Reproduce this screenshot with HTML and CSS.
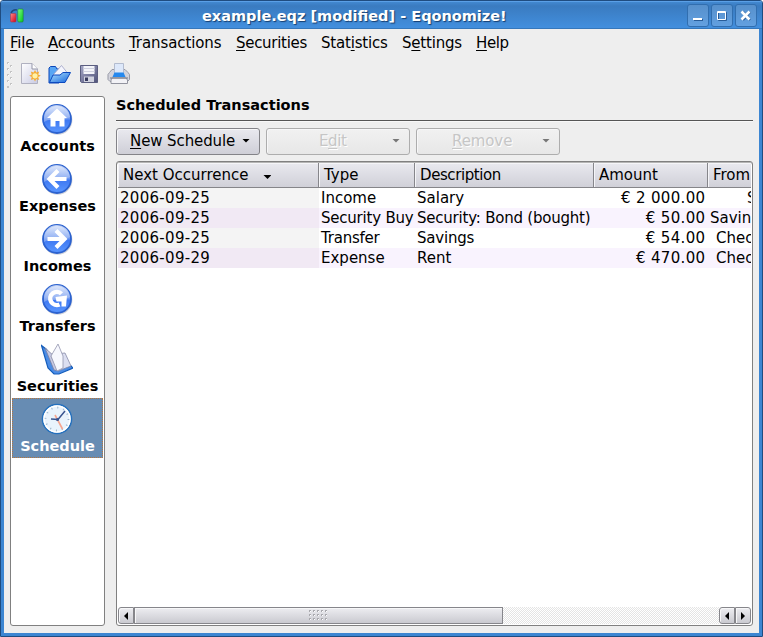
FILE: index.html
```html
<!DOCTYPE html>
<html lang="en">
<head>
<meta charset="utf-8">
<title>example.eqz [modified] - Eqonomize!</title>
<link rel="stylesheet" href="styles.css">
</head>
<body>
<svg class="defs" width="0" height="0">
  <defs>
    <linearGradient id="ball" x1="0" y1="0" x2="0" y2="1"><stop offset="0" stop-color="#d3dffa"/><stop offset=".45" stop-color="#7fa3f3"/><stop offset=".55" stop-color="#3f79f2"/><stop offset="1" stop-color="#5b98ff"/></linearGradient>
    <linearGradient id="gloss" x1="0" y1="0" x2="0" y2="1"><stop offset="0" stop-color="#e8effd"/><stop offset="1" stop-color="#86a8f0"/></linearGradient>
    <linearGradient id="page" x1="0" y1="0" x2="1" y2="1"><stop offset="0" stop-color="#fff"/><stop offset="1" stop-color="#c9cbe4"/></linearGradient>
    <linearGradient id="folder" x1="0" y1="0" x2="1" y2="1"><stop offset="0" stop-color="#b4e6ff"/><stop offset="1" stop-color="#1263dc"/></linearGradient>
    <linearGradient id="disk" x1="0" y1="0" x2="1" y2="1"><stop offset="0" stop-color="#a4a6c6"/><stop offset="1" stop-color="#50537a"/></linearGradient>
    <linearGradient id="red" x1="0" y1="0" x2="1" y2="1"><stop offset="0" stop-color="#ff8a8a"/><stop offset="1" stop-color="#d00018"/></linearGradient>
    <linearGradient id="green" x1="0" y1="0" x2="1" y2="1"><stop offset="0" stop-color="#7dff80"/><stop offset="1" stop-color="#06c520"/></linearGradient>
    <g id="disc">
      <circle cx="16.6" cy="17" r="14.8" fill="#8b93a8" opacity=".4"/>
      <circle cx="16" cy="16" r="14" fill="url(#ball)" stroke="#2c62cf" stroke-width="1.8"/>
      <path d="M3 16A13 13 0 0 1 29 14Q22 18 14 17Q7 16 3 19z" fill="url(#gloss)" opacity=".75"/>
    </g>
  </defs>
</svg>
<div class="window">
  <header class="titlebar">
    <svg class="app-icon" width="16" height="16" viewBox="0 0 16 16"><path d="M2 5Q4 1 8 2" fill="none" stroke="#234a80" stroke-width="1.5"/><rect x="1.500" y="5.500" width="5.500" height="8.500" rx="1" fill="url(#red)" stroke="#a33a50" stroke-width=".6"/><rect x="8.800" y="1" width="5.400" height="13" rx="1" fill="url(#green)" stroke="#17803a" stroke-width=".6"/></svg>
    <h1 class="caption">example.eqz [modified] - Eqonomize!</h1>
    <div class="controls">
      <span class="control"><svg width="20" height="20" viewBox="0 0 20 20"><path d="M6 14h9v2h-9z" fill="#285c98"/><path d="M5 13h9v2H5z" fill="#fff"/></svg></span>
      <span class="control"><svg width="20" height="20" viewBox="0 0 20 20"><path d="M6.500 7.500h8v8h-8z" fill="none" stroke="#285c98"/><path d="M5.500 6.500h8v8h-8zM5 7.500h9" fill="none" stroke="#fff"/></svg></span>
      <span class="control"><svg width="20" height="20" viewBox="0 0 20 20"><path d="M7 7l7 8M14 7l-7 8" stroke="#285c98" stroke-width="2.400"/><path d="M5.500 6.500l8 8M13.500 6.500l-8 8" stroke="#fff" stroke-width="2.600"/></svg></span>
    </div>
  </header>
  <nav class="menubar">
    <span class="m-file"><u>F</u>ile</span><span class="m-accounts"><u>A</u>ccounts</span><span class="m-transactions"><u>T</u>ransactions</span><span class="m-securities"><u>S</u>ecurities</span><span class="m-statistics">Stat<u>i</u>stics</span><span class="m-settings">S<u>e</u>ttings</span><span class="m-help"><u>H</u>elp</span>
  </nav>
  <div class="toolbar">
    <svg class="grip" width="6" height="28" viewBox="0 0 6 28"><g fill="#c4c4c4"><path d="M0 0h2v2H0zM3 3h2v2H3zM0 6h2v2H0zM3 9h2v2H3zM0 12h2v2H0zM3 15h2v2H3zM0 18h2v2H0zM3 21h2v2H3zM0 24h2v2H0z"/></g><g fill="#fff"><path d="M1 1h1v1H1zM4 4h1v1H4zM1 7h1v1H1zM4 10h1v1H4zM1 13h1v1H1zM4 16h1v1H4zM1 19h1v1H1zM4 22h1v1H4z"/></g></svg>
    <svg width="22" height="24" viewBox="0 0 22 24"><path d="M2.500 1.500H13l5.500 5.500v14.500h-16z" fill="url(#page)" stroke="#b0b1c0"/><path d="M13 1.500V7h5.500" fill="#fff" stroke="#9395a6"/><path d="M16 8l1.300 2.600 2.900-1-1 2.900 2.600 1.300-2.600 1.300 1 2.900-2.900-1L16 19.600 14.700 17l-2.900 1 1-2.900-2.600-1.300 2.600-1.300-1-2.900 2.900 1z" fill="#f5ad36"/><circle cx="16" cy="13.800" r="2.600" fill="#fff2a6"/></svg>
    <svg width="23" height="24" viewBox="0 0 23 24"><path d="M1 21V6l1.500-1.500h5L9 7h2v14z" fill="#58a6f4" stroke="#0b45b8"/><path d="M5 13l8.500-9.500 6 7.500-1 6H6z" fill="#f4f5fd" stroke="#9da1c4" stroke-width=".8"/><path d="M1.500 20.500L5 13h7l3-2.500h7.500L17 20.500z" fill="url(#folder)" stroke="#0c49bf"/></svg>
    <svg width="22" height="24" viewBox="0 0 22 24"><path d="M2.500 3.500h17v17h-16l-1-1z" fill="url(#disk)" stroke="#5b5e80"/><path d="M5.500 4h11v8h-11z" fill="#f4f5fa"/><path d="M5.500 6.500h11M5.500 9.500h11" stroke="#d0d2e0"/><path d="M6 14.500h10V20H6z" fill="#d0d2df"/><path d="M7 15.500h3V19H7z" fill="#383b5e"/></svg>
    <svg width="24" height="24" viewBox="0 0 24 24"><path d="M5 7.500h13l3 3 1.500 2v5l-2 2H3l-2-2v-5l1.500-2z" fill="#d2d3dc" stroke="#9699a6"/><path d="M7.500 1.500h9v10h-9z" fill="#dde8fa" stroke="#b3bccf"/><path d="M7.500 10.500h9l2 4.500h-13z" fill="#2588ee"/><path d="M5 16h14l1.500 2v3.500H4V18z" fill="#f2f2f6" stroke="#92949f"/><path d="M3 16h18" stroke="#777a87"/></svg>
  </div>
  <main class="workspace">
    <aside class="sidebar">
      <div class="entry"><svg width="32" height="32" viewBox="0 0 32 32"><use href="#disc"/><path d="M16 5.500l10 9.500h-2.500v8.500h-5V18h-4v5.500H9.500V15H6z" fill="#fff"/></svg><b>Accounts</b></div>
      <div class="entry"><svg width="32" height="32" viewBox="0 0 32 32"><use href="#disc"/><path d="M25.500 16H9M17 7.500L8.500 16l8.500 8.500" fill="none" stroke="#fff" stroke-width="4.200"/></svg><b>Expenses</b></div>
      <div class="entry"><svg width="32" height="32" viewBox="0 0 32 32"><use href="#disc"/><path d="M6.500 16H23M15 7.500l8.500 8.500-8.500 8.500" fill="none" stroke="#fff" stroke-width="4.200"/></svg><b>Incomes</b></div>
      <div class="entry"><svg width="32" height="32" viewBox="0 0 32 32"><use href="#disc"/><path d="M20.500 10.800A6.600 6.600 0 1 0 18.500 21.500" fill="none" stroke="#fff" stroke-width="4.400"/><path d="M14.500 14L26 12.500l-1 11h-4.500v-5h-5z" fill="#fff"/></svg><b>Transfers</b></div>
      <div class="entry"><svg width="32" height="32" viewBox="0 0 32 32"><path d="M0.500 2.500l5 4L15 27l15-4 2 2-14 6H13L7 25z" fill="#4b8ce5" stroke="#145dbb" stroke-width="1.200"/><path d="M4 5l9 8 5 15-5-1z" fill="#c6c9e3" stroke="#7e829f" stroke-width=".8"/><path d="M14 11l10-1 6 13-13 5-7-15z" fill="#dcdff1" stroke="#868aa7" stroke-width=".8"/><path d="M17 1l5 12v12l-6 3-6-15z" fill="#f7f8fe" stroke="#9396ae" stroke-width=".8"/></svg><b>Securities</b></div>
      <div class="entry selected"><svg width="32" height="32" viewBox="0 0 32 32"><circle cx="16" cy="16" r="14.500" fill="#e9f3fc" stroke="#2470bd" stroke-width="1.600"/><circle cx="16" cy="16" r="13" fill="none" stroke="#fff" stroke-width="1.500"/><circle cx="16" cy="16" r="11.500" fill="none" stroke="#9cb6cc" stroke-width="1.800" stroke-dasharray="1 5.020"/><path d="M14 12l7.500 14" stroke="#f6a48e" stroke-width="1.600"/><path d="M10 16l7 .5L24 8" fill="none" stroke="#38538f" stroke-width="1.500"/><circle cx="16.500" cy="16.500" r="1.500" fill="#38538f"/></svg><b>Schedule</b></div>
    </aside>
    <section class="panel">
      <h2 class="heading">Scheduled Transactions</h2>
      <div class="actions">
        <button class="action new"><span><u>N</u>ew Schedule</span><i class="arrow"></i></button>
        <button class="action edit" disabled><span>E<u>d</u>it</span><i class="arrow"></i></button>
        <button class="action remove" disabled><span><u>R</u>emove</span><i class="arrow"></i></button>
      </div>
      <div class="list">
        <div class="row head"><div class="h-next">Next Occurrence<i class="arrow"></i></div><div>Type</div><div class="h-desc">Description</div><div>Amount</div><div class="h-from">From</div></div>
        <div class="row"><div class="date">2006-09-25</div><div>Income</div><div>Salary</div><div class="amount">€ 2 000.00</div><div class="from f-salary">Salary</div></div>
        <div class="row"><div class="date">2006-09-25</div><div class="tight">Security Buy</div><div class="tight">Security: Bond (bought)</div><div class="amount">€ 50.00</div><div class="from f-savings">Savings</div></div>
        <div class="row"><div class="date">2006-09-25</div><div class="tight">Transfer</div><div class="tight">Savings</div><div class="amount">€ 54.00</div><div class="from">Checking</div></div>
        <div class="row"><div class="date">2006-09-29</div><div>Expense</div><div>Rent</div><div class="amount">€ 470.00</div><div class="from">Checking</div></div>
        <div class="blank"></div>
        <div class="scrollbar">
          <span class="step"><svg width="6" height="8" viewBox="0 0 6 8"><path d="M5 0v8L1 4z"/></svg></span>
          <span class="thumb"><svg width="19" height="11" viewBox="0 0 19 11"><defs><pattern id="dots" width="4" height="4" patternUnits="userSpaceOnUse"><path d="M0 0h2v2H0z" fill="#a9a9ae"/><path d="M1 1h1v1H1z" fill="#fff"/></pattern></defs><path d="M0 0h19v11H0z" fill="url(#dots)"/></svg></span>
          <span class="trough"></span>
          <span class="step"><svg width="6" height="8" viewBox="0 0 6 8"><path d="M5 0v8L1 4z"/></svg></span>
          <span class="step last"><svg width="6" height="8" viewBox="0 0 6 8"><path d="M1 0v8l4-4z"/></svg></span>
        </div>
      </div>
    </section>
  </main>
</div>
</body>
</html>
```
FILE: styles.css
```css
* { box-sizing: border-box; }
body { margin: 0; font: 15px/20px "DejaVu Sans", sans-serif; color: #000; background: #fff; overflow: hidden; }
.defs { display: block; }
svg { display: block; flex: none; }
u { text-decoration: underline; text-decoration-thickness: 1px; text-underline-offset: 2px; text-decoration-skip-ink: none; }
.window { width: 763px; height: 637px; display: flex; flex-direction: column; background: #eee; border: 1px solid #1f4c80; border-radius: 3px 3px 0 0; box-shadow: inset 3px 0 #3c86d2, inset -3px 0 #3c86d2, inset 0 -3px #3c86d2; overflow: hidden; }

.titlebar { height: 28px; flex: none; display: flex; align-items: center; padding: 0 5px 0 8px; background: linear-gradient(#5a9fe6 0 1px, #4288d0 1px, #3a7bc0 5px, #428fde 27px, #3577bb 27px); }
.app-icon { margin-top: 1px; }
.caption { flex: 1; margin: 0; padding: 2px 0 0 177px; font-size: 14.5px; line-height: 20px; color: #fff; white-space: nowrap; text-shadow: 1px 1px 1px #153e70; }
.controls { display: flex; gap: 2px; padding-top: 1px; }
.control { width: 22px; height: 23px; border: 1px solid #316eaf; border-radius: 3px; background: linear-gradient(#5790cc, #62a0e0); }

.menubar { height: 28px; flex: none; display: flex; padding: 4px 0 0 9px; white-space: nowrap; letter-spacing: -.2px; }
.m-file { width: 38px; letter-spacing: -.2px; }
.m-accounts { width: 81px; }
.m-transactions { width: 107px; letter-spacing: -.1px; }
.m-securities { width: 85px; letter-spacing: -.3px; }
.m-statistics { width: 81px; }
.m-settings { width: 74px; }
.m-help { letter-spacing: -.4px; }
.toolbar { height: 38px; flex: none; display: flex; padding: 5px 0 0 6px; gap: 7px; }
.grip { margin-right: -1px; }

.workspace { flex: 1; min-height: 0; display: flex; gap: 11px; padding: 1px 9px 10px; }
.sidebar { width: 95px; border: 1px solid #808080; border-radius: 3px; background: #fff; padding: 1px; }
.entry { height: 60px; display: flex; flex-direction: column; align-items: center; padding-top: 5px; white-space: nowrap; }
.entry svg { margin-right: 1px; }
.entry b { font-size: 14.5px; line-height: 22px; }
.selected { background: #678cb3; color: #fff; outline: 1px dotted #b8763c; outline-offset: -1px; }
.panel { width: 637px; display: flex; flex-direction: column; }
.heading { margin: 0 0 7px; height: 25px; flex: none; border-bottom: 1px solid #555; font-size: 14.5px; line-height: 19px; white-space: nowrap; box-shadow: 0 1px #f8f8f8; }
.actions { height: 27px; flex: none; display: flex; gap: 6px; margin-bottom: 6px; }
.action { width: 144px; height: 27px; display: flex; align-items: center; padding: 0 9px 2px 13px; border: 1px solid #838388; border-radius: 3px; background: linear-gradient(#e9e9ef, #cfcfd7); color: #000; font: inherit; letter-spacing: -.1px; white-space: nowrap; box-shadow: inset 1px 1px #f7f7f8; }
.action span { flex: 1; text-align: left; }
.action:disabled { color: #c6c6c6; border-color: #adadad; background: linear-gradient(#f1f1f1, #e7e7e7); text-shadow: 1px 1px #fff; }
.action.edit { padding-left: 52px; letter-spacing: -.4px; }
.action.remove { padding-left: 35px; }
.arrow { width: 8px; height: 4px; flex: none; background: #000; clip-path: polygon(0 0, 100% 0, 50% 100%); }
:disabled .arrow { background: #777; }

.list { flex: 1; min-height: 0; display: flex; flex-direction: column; border: 1px solid #808080; border-radius: 3px; background: #fff; padding: 1px; overflow: hidden; box-shadow: inset 0 1px #b5b5b5; }
.row { display: grid; grid-template-columns: 201px 96px 179px 114px 43px; height: 20px; flex: none; white-space: nowrap; }
.row > div { padding-left: 2px; overflow: hidden; }
.row > .date { background: #f4f4f4; letter-spacing: .3px; }
.row:nth-child(odd) { background: #f9f3fe; }
.row:nth-child(odd) > .date { background: #f1e9f4; }
.row > .tight { letter-spacing: -.22px; }
.row > .amount { text-align: right; padding-right: 2.5px; letter-spacing: .35px; }
.row > .from { padding-left: 8px; }
.row > .f-salary { padding-left: 39px; }
.row > .f-savings { padding-left: 2px; }
.row.head { height: 25px; background: linear-gradient(#e9e9ef, #cfcfd7); }
.head > div { border-right: 1px solid #86868b; border-bottom: 1px solid #858589; box-shadow: inset 1px 1px #f5f5f8; line-height: 24px; }
.row.head > div { padding-left: 5px; padding-top: 1px; line-height: 23px; }
.row.head > .h-next { display: flex; align-items: center; gap: 15px; }
.h-next .arrow { margin-top: 3px; }
.row.head > .h-desc { letter-spacing: -.42px; }
.row.head > .h-from { border-right: 0; }
.blank { flex: 1; }
.scrollbar { height: 17px; flex: none; display: flex; }
.step, .thumb { border: 1px solid #86868b; background: linear-gradient(#ededf1, #cacad0); display: flex; align-items: center; justify-content: center; box-shadow: inset 1px 1px #f7f7f8; }
.step { width: 16px; flex: none; border-radius: 3px 0 0 3px; }
.last { border-radius: 0 3px 3px 0; }
.thumb { width: 369px; flex: none; }
.trough { flex: 1; background: repeating-conic-gradient(#e4e4e4 0 25%, #fff 0 50%) 0 0 / 2px 2px; }
```
